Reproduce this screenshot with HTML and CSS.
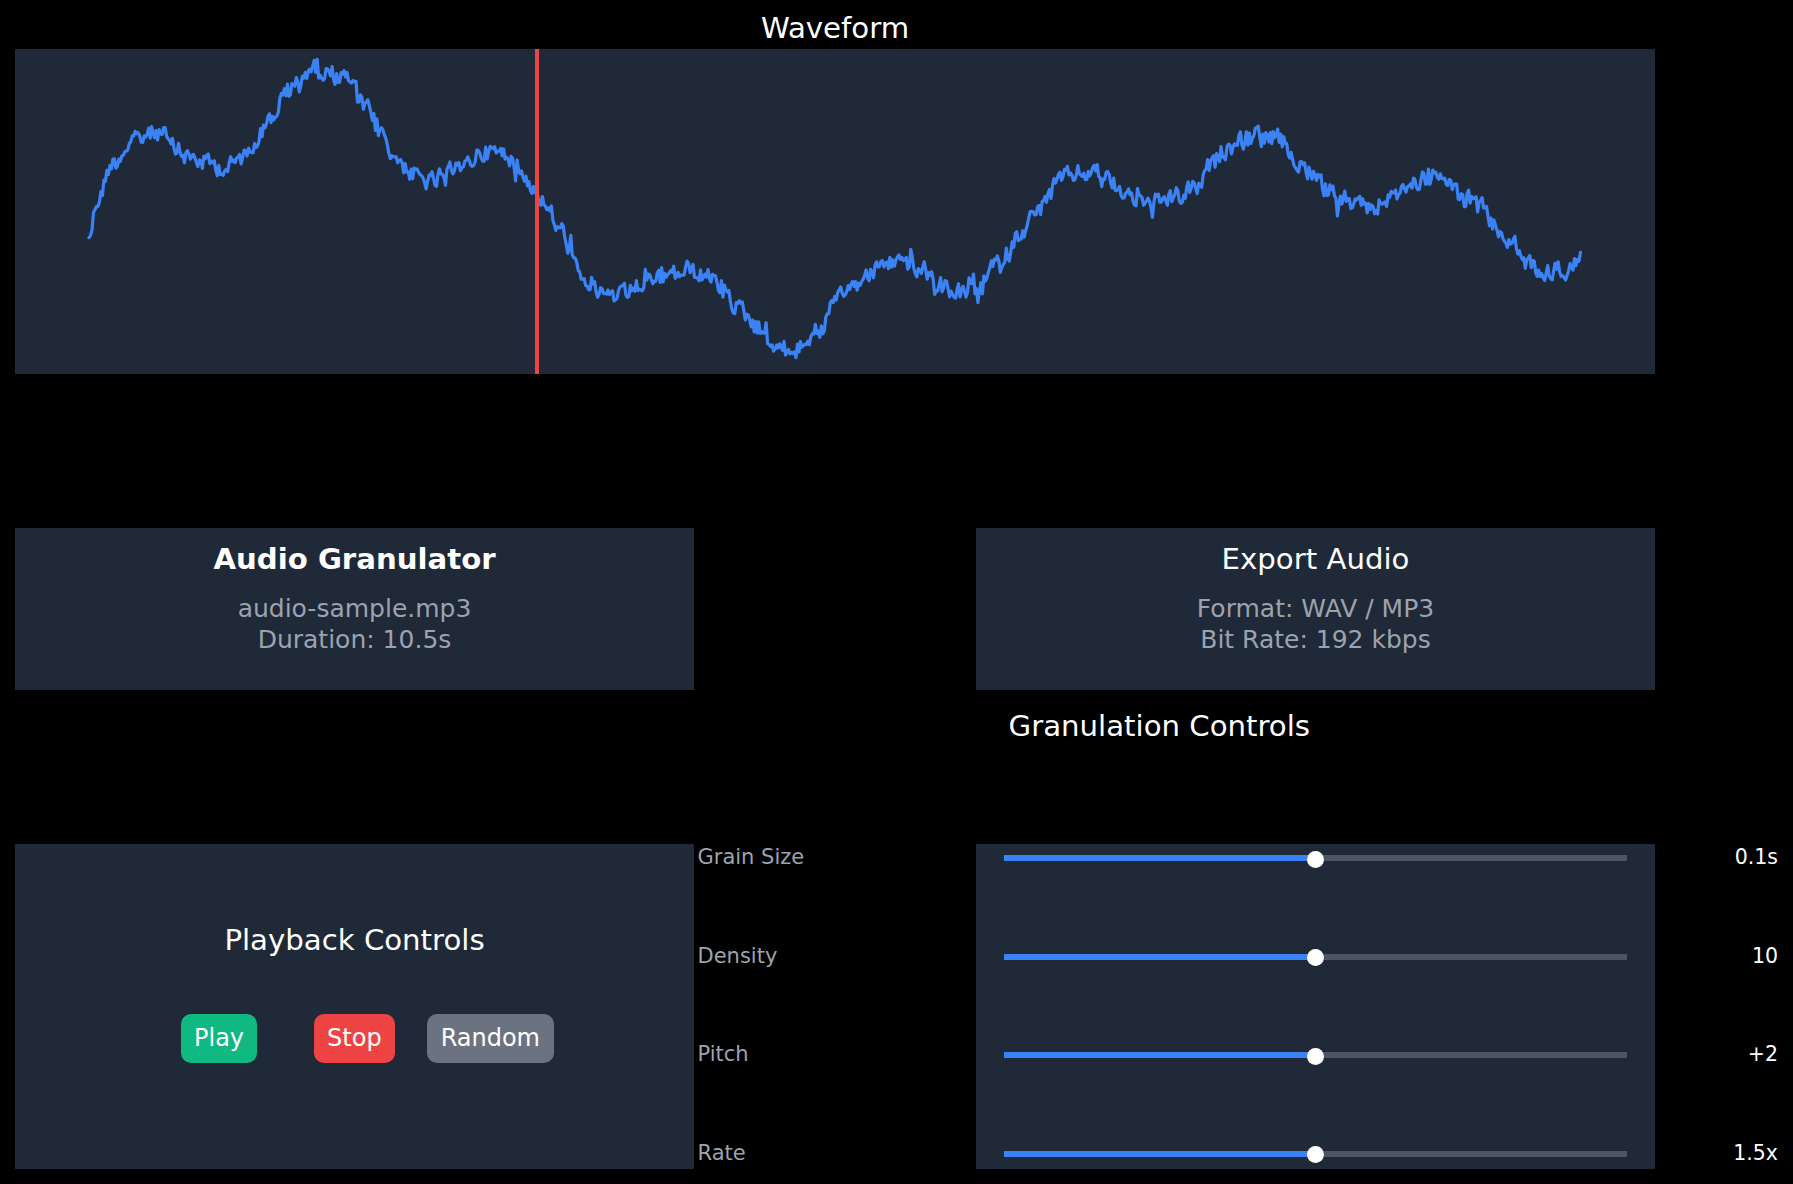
FILE: index.html
```html
<!DOCTYPE html>
<html lang="en">
<head>
<meta charset="utf-8">
<title>Audio Granulator</title>
<link rel="stylesheet" href="styles.css">
</head>
<body>
<div class="page">
  <section class="wave-section">
    <h2 class="wave-title">Waveform</h2>
    <div class="wave-panel">
      <svg id="wave" class="wave-svg" width="1640" height="325" viewBox="0 0 1640 325">
        <polyline id="wave-line" class="wave-line" points=""></polyline>
        <rect class="playhead" x="520" y="0" width="4" height="325"></rect>
      </svg>
    </div>
  </section>

  <section class="info-row">
    <div class="info-panel">
      <h1 class="info-title bold">Audio Granulator</h1>
      <div class="info-sub">audio-sample.mp3</div>
      <div class="info-sub">Duration: 10.5s</div>
    </div>
    <div class="info-panel export">
      <h2 class="info-title">Export Audio</h2>
      <div class="info-sub">Format: WAV / MP3</div>
      <div class="info-sub">Bit Rate: 192 kbps</div>
    </div>
    <h2 class="gran-title">Granulation Controls</h2>
  </section>

  <section class="controls">
    <div class="playback-panel">
      <h2 class="playback-title">Playback Controls</h2>
      <div class="buttons">
        <button class="btn btn-play">Play</button>
        <button class="btn btn-stop">Stop</button>
        <button class="btn btn-random">Random</button>
      </div>
    </div>
    <div class="labels rows">
      <div class="label">Grain Size</div>
      <div class="label">Density</div>
      <div class="label">Pitch</div>
      <div class="label">Rate</div>
    </div>
    <div class="slider-panel rows">
      <div class="slider"><div class="track"><div class="fill"></div><div class="thumb"></div></div></div>
      <div class="slider"><div class="track"><div class="fill"></div><div class="thumb"></div></div></div>
      <div class="slider"><div class="track"><div class="fill"></div><div class="thumb"></div></div></div>
      <div class="slider"><div class="track"><div class="fill"></div><div class="thumb"></div></div></div>
    </div>
    <div class="values rows">
      <div class="value">0.1s</div>
      <div class="value">10</div>
      <div class="value">+2</div>
      <div class="value">1.5x</div>
    </div>
  </section>
</div>
<script src="script.js"></script>
</body>
</html>
```

FILE: styles.css
```css
* { box-sizing: border-box; }
html, body {
  margin: 0;
  padding: 0;
  background: #000;
}
body {
  font-family: "DejaVu Sans", "Liberation Sans", sans-serif;
  color: #fff;
  width: 1793px;
  height: 1184px;
  overflow: hidden;
}
.page {
  padding: 0 15px;
}
h1, h2 { margin: 0; font-weight: normal; }

.wave-section { width: 1640px; }
.wave-title {
  font-size: 29.2px;
  line-height: 34px;
  text-align: center;
  padding-top: 11px;
  margin-bottom: 4px;
}
.wave-panel {
  height: 325px;
  background: #1f2937;
}
.wave-svg { display: block; }
.wave-line {
  fill: none;
  stroke: #3b82f6;
  stroke-width: 3.2;
  stroke-linejoin: round;
  stroke-linecap: round;
}
.playhead { fill: #ef4444; }

.info-row {
  margin-top: 154px;
  display: grid;
  grid-template-columns: 679px 282px 679px;
  grid-template-rows: 162px auto;
}
.info-panel {
  background: #1f2937;
  text-align: center;
  padding-top: 14px;
}
.info-panel.export { grid-column: 3; }
.info-title {
  font-size: 29.2px;
  line-height: 34px;
  margin-bottom: 16.5px;
}
.info-title.bold { font-weight: bold; }
.info-sub {
  font-size: 25px;
  line-height: 31px;
  color: #9ca3af;
}
.gran-title {
  grid-column: 3;
  font-size: 29.2px;
  line-height: 34px;
  margin-top: 19px;
  padding-left: 32.6px;
}

.controls {
  margin-top: 100.5px;
  display: grid;
  grid-template-columns: 679px 282px 679px 123px;
  height: 325px;
}
.playback-panel {
  background: #1f2937;
  text-align: center;
  padding-top: 79.5px;
}
.playback-title {
  font-size: 29.2px;
  line-height: 34px;
}
.buttons {
  display: flex;
  margin-top: 56.5px;
  padding-left: 166px;
}
.btn {
  font-family: "DejaVu Sans", "Liberation Sans", sans-serif;
  font-size: 24px;
  line-height: 28px;
  padding: 10.5px 13px;
  border: none;
  border-radius: 10px;
  color: #fff;
}
.btn-play { background: #10b981; margin-right: 57px; }
.btn-stop { background: #ef4444; margin-right: 32px; }
.btn-random { background: #6b7280; padding: 10.5px 14px; }

.rows {
  display: grid;
  grid-template-rows: repeat(4, 24px);
  row-gap: 74.6px;
  padding-top: 1.5px;
  align-content: start;
}
.labels { padding-left: 3.5px; }
.label {
  font-size: 21px;
  line-height: 24px;
  color: #9ca3af;
}
.slider-panel {
  background: #1f2937;
  padding-left: 28px;
  padding-right: 28px;
}
.slider {
  height: 24px;
  padding-top: 2.4px;
  display: flex;
  align-items: center;
}
.track {
  position: relative;
  width: 100%;
  height: 6px;
  background: #4b5563;
}
.fill {
  width: 50%;
  height: 100%;
  background: #3b82f6;
}
.thumb {
  position: absolute;
  left: 50%;
  top: 50%;
  width: 17px;
  height: 17px;
  margin-left: -8.5px;
  margin-top: -7.5px;
  border-radius: 50%;
  background: #fff;
}
.values { text-align: right; }
.value {
  font-size: 20.5px;
  line-height: 24px;
  color: #fff;
}
```

FILE: script.js
```js
(function () {
  var pts = [[89,235],[97.6,200],[112,163],[132,143],[149,133],[161,132],[172,148],[189,157],[207,163],[227,168],[241,158],[255,140],[270,120],[284,97],[298.5,83],[310,68],[327,73],[344,75],[353,87],[364.5,107],[379,130],[396,157],[413,175],[430.5,182],[448,177],[465,163],[482,152],[499,153],[514,160],[525,177],[537,193],[548,210],[560,230],[574,253],[585.5,280],[603,293],[620,297],[637,287],[654,280],[672,275],[689,270],[706,278],[723,290],[740.5,310],[758,327],[775,345],[789,352],[804,343],[821,330],[832,307],[850,288],[867,277],[884,263],[900,261],[923,270],[940,287],[962.6,293],[980,293],[991,267],[1008,253],[1019.6,233],[1036.7,213],[1048,197],[1059.5,180],[1076.5,173],[1093.6,172],[1110.7,182],[1127.8,193],[1145,203],[1162,200],[1179,197],[1196,187],[1210,167],[1224.6,150],[1241.7,140],[1258.8,135],[1275.8,138],[1293,157],[1310,170],[1327,190],[1344,203],[1361,208],[1378,205],[1395,193],[1412.5,183],[1429.6,177],[1446.7,182],[1463.8,197],[1481,208],[1498,230],[1515,247],[1526,263],[1543.5,273],[1560.6,270],[1580.5,262]];
  var seed = 12345;
  function rnd() {
    seed = (seed * 1103515245 + 12345) % 2147483648;
    return seed / 2147483648;
  }
  function base(x) {
    if (x <= pts[0][0]) return pts[0][1];
    for (var i = 1; i < pts.length; i++) {
      if (x <= pts[i][0]) {
        var a = pts[i - 1], b = pts[i];
        var t = (x - a[0]) / (b[0] - a[0]);
        var s = (1 - Math.cos(t * Math.PI)) / 2;
        return a[1] + (b[1] - a[1]) * s;
      }
    }
    return pts[pts.length - 1][1];
  }
  var x0 = pts[0][0], x1 = pts[pts.length - 1][0];
  var n = 1000;
  var out = [];
  var prev = 0;
  for (var k = 0; k <= n; k++) {
    var x = x0 + (x1 - x0) * k / n;
    var r = rnd() - 0.5;
    var spike = rnd() < 0.08 ? (rnd() - 0.5) * 22 : 0;
    var noise = 0.35 * prev + r * 17;
    prev = noise;
    var y = base(x) + noise + spike;
    out.push((x - 15).toFixed(1) + "," + (y - 49).toFixed(1));
  }
  document.getElementById("wave-line").setAttribute("points", out.join(" "));
})();
```
